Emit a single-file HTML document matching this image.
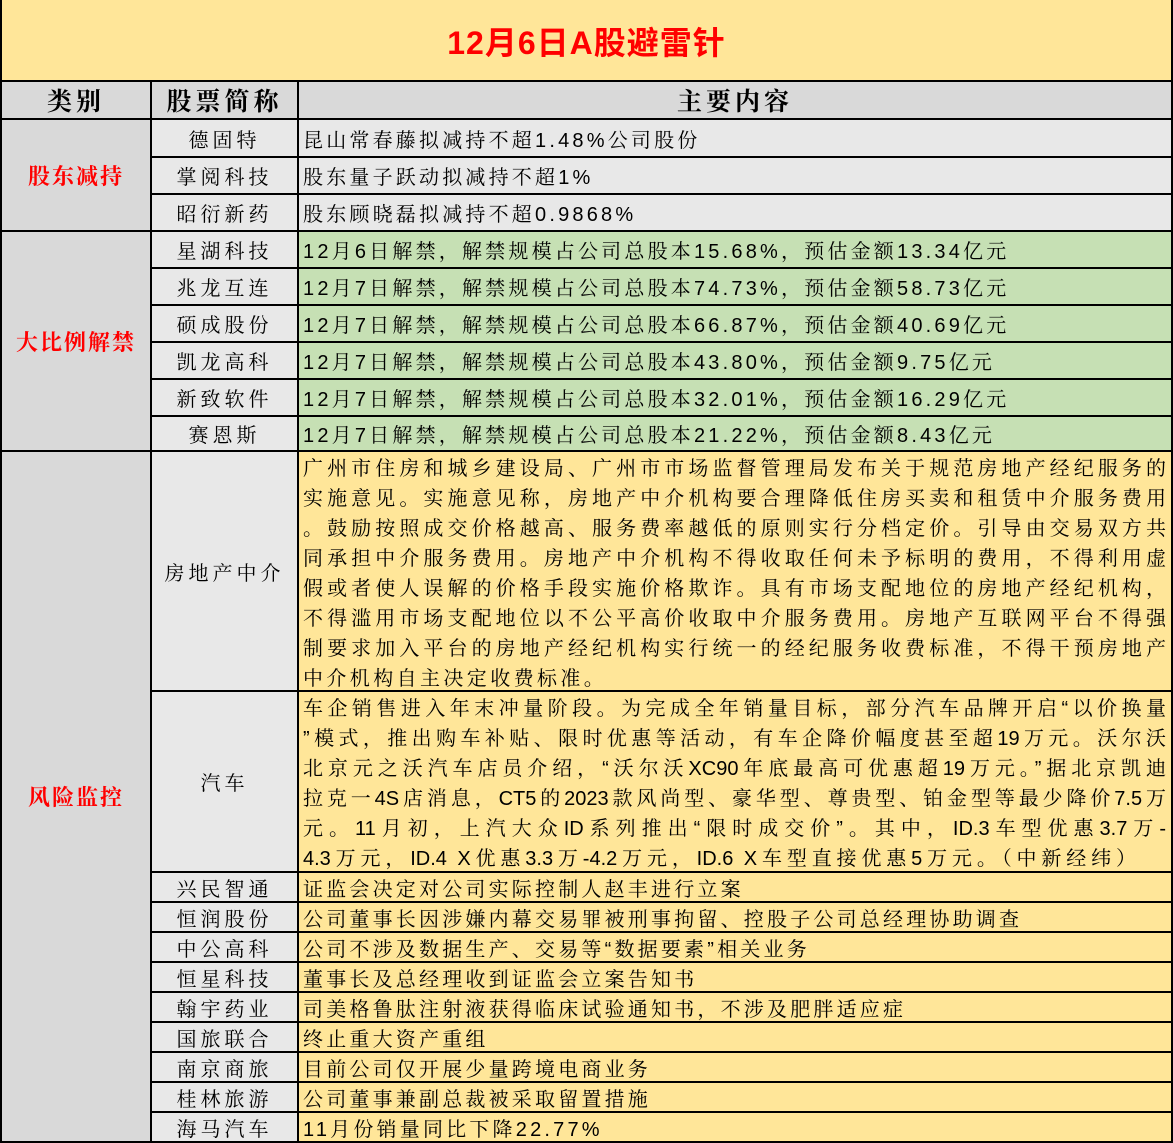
<!DOCTYPE html>
<html><head><meta charset="utf-8"><style>
body{margin:0;width:1173px;height:1143px;position:relative;overflow:hidden;background:#fff;font-family:"Liberation Sans","Noto Serif CJK SC",serif;}
.c{position:absolute;box-sizing:border-box;border-right:2px solid #000;border-bottom:2px solid #000;display:flex;align-items:center;}
.t{position:absolute;left:0;top:0;width:1173px;height:82px;background:#ffe699;border:2px solid #000;border-top:none;box-sizing:border-box;text-align:center;font:bold 32px "Liberation Sans","Noto Sans CJK SC",sans-serif;color:#f00;line-height:86px;letter-spacing:1px}
.h{background:#d9d9d9;justify-content:center;font-weight:bold;font-size:25px;letter-spacing:4px;font-family:"Liberation Serif","Noto Serif CJK SC",serif}
.cat{background:#d9d9d9;justify-content:center;color:#f00;font-weight:bold;font-size:22px;letter-spacing:2px;border-left:2px solid #000;font-family:"Liberation Serif","Noto Serif CJK SC",serif}
.n{background:#e8e8e8;justify-content:center;font-size:20px;letter-spacing:4px}
.g{background:#e8e8e8}.gr{background:#c6e0b4}.y{background:#ffe699}
.x{padding-left:4px;font-size:20px;letter-spacing:3.2px;white-space:nowrap}
.p{display:block;padding:2px 5px 0 4px;font-size:20px}
.p div{height:30px;line-height:30px;text-align:justify;text-align-last:justify;white-space:nowrap}
</style></head><body>
<div class="t">12月6日A股避雷针</div>
<div class="c h" style="left:0;top:82px;width:152px;height:38px;border-left:2px solid #000">类别</div>
<div class="c h" style="left:152px;top:82px;width:147px;height:38px">股票简称</div>
<div class="c h" style="left:299px;top:82px;width:874px;height:38px">主要内容</div>

<div class="c cat" style="left:0;top:120px;width:152px;height:112px">股东减持</div>
<div class="c cat" style="left:0;top:232px;width:152px;height:220px">大比例解禁</div>
<div class="c cat" style="left:0;top:452px;width:152px;height:691px">风险监控</div>

<div class="c n" style="left:152px;top:120px;width:147px;height:38px">德固特</div>
<div class="c x g" style="left:299px;top:120px;width:874px;height:38px">昆山常春藤拟减持不超1.48%公司股份</div>
<div class="c n" style="left:152px;top:158px;width:147px;height:37px">掌阅科技</div>
<div class="c x g" style="left:299px;top:158px;width:874px;height:37px">股东量子跃动拟减持不超1%</div>
<div class="c n" style="left:152px;top:195px;width:147px;height:37px">昭衍新药</div>
<div class="c x g" style="left:299px;top:195px;width:874px;height:37px">股东顾晓磊拟减持不超0.9868%</div>

<div class="c n" style="left:152px;top:232px;width:147px;height:37px">星湖科技</div>
<div class="c x gr" style="left:299px;top:232px;width:874px;height:37px">12月6日解禁，解禁规模占公司总股本15.68%，预估金额13.34亿元</div>
<div class="c n" style="left:152px;top:269px;width:147px;height:37px">兆龙互连</div>
<div class="c x gr" style="left:299px;top:269px;width:874px;height:37px">12月7日解禁，解禁规模占公司总股本74.73%，预估金额58.73亿元</div>
<div class="c n" style="left:152px;top:306px;width:147px;height:37px">硕成股份</div>
<div class="c x gr" style="left:299px;top:306px;width:874px;height:37px">12月7日解禁，解禁规模占公司总股本66.87%，预估金额40.69亿元</div>
<div class="c n" style="left:152px;top:343px;width:147px;height:37px">凯龙高科</div>
<div class="c x gr" style="left:299px;top:343px;width:874px;height:37px">12月7日解禁，解禁规模占公司总股本43.80%，预估金额9.75亿元</div>
<div class="c n" style="left:152px;top:380px;width:147px;height:37px">新致软件</div>
<div class="c x gr" style="left:299px;top:380px;width:874px;height:37px">12月7日解禁，解禁规模占公司总股本32.01%，预估金额16.29亿元</div>
<div class="c n" style="left:152px;top:417px;width:147px;height:35px">赛恩斯</div>
<div class="c x gr" style="left:299px;top:417px;width:874px;height:35px">12月7日解禁，解禁规模占公司总股本21.22%，预估金额8.43亿元</div>

<div class="c n" style="left:152px;top:452px;width:147px;height:240px">房地产中介</div>
<div class="c p y" style="left:299px;top:452px;width:874px;height:240px">
<div>广州市住房和城乡建设局、广州市市场监督管理局发布关于规范房地产经纪服务的</div>
<div>实施意见。实施意见称，房地产中介机构要合理降低住房买卖和租赁中介服务费用</div>
<div>。鼓励按照成交价格越高、服务费率越低的原则实行分档定价。引导由交易双方共</div>
<div>同承担中介服务费用。房地产中介机构不得收取任何未予标明的费用，不得利用虚</div>
<div>假或者使人误解的价格手段实施价格欺诈。具有市场支配地位的房地产经纪机构，</div>
<div>不得滥用市场支配地位以不公平高价收取中介服务费用。房地产互联网平台不得强</div>
<div>制要求加入平台的房地产经纪机构实行统一的经纪服务收费标准，不得干预房地产</div>
<div style="text-align-last:left;letter-spacing:3.4px">中介机构自主决定收费标准。</div>
</div>
<div class="c n" style="left:152px;top:692px;width:147px;height:181px">汽车</div>
<div class="c p y" style="left:299px;top:692px;width:874px;height:181px">
<div>车企销售进入年末冲量阶段。为完成全年销量目标，部分汽车品牌开启“以价换量</div>
<div>”模式，推出购车补贴、限时优惠等活动，有车企降价幅度甚至超19万元。沃尔沃</div>
<div>北京元之沃汽车店员介绍，“沃尔沃XC90年底最高可优惠超19万元。”据北京凯迪</div>
<div>拉克一4S店消息，CT5的2023款风尚型、豪华型、尊贵型、铂金型等最少降价7.5万</div>
<div>元。11月初，上汽大众ID系列推出“限时成交价”。其中，ID.3车型优惠3.7万-</div>
<div style="padding-right:30px">4.3万元，ID.4 X优惠3.3万-4.2万元，ID.6 X车型直接优惠5万元。（中新经纬）</div>
</div>

<div class="c n" style="left:152px;top:873px;width:147px;height:30px">兴民智通</div>
<div class="c x y" style="left:299px;top:873px;width:874px;height:30px">证监会决定对公司实际控制人赵丰进行立案</div>
<div class="c n" style="left:152px;top:903px;width:147px;height:30px">恒润股份</div>
<div class="c x y" style="left:299px;top:903px;width:874px;height:30px">公司董事长因涉嫌内幕交易罪被刑事拘留、控股子公司总经理协助调查</div>
<div class="c n" style="left:152px;top:933px;width:147px;height:30px">中公高科</div>
<div class="c x y" style="left:299px;top:933px;width:874px;height:30px">公司不涉及数据生产、交易等“数据要素”相关业务</div>
<div class="c n" style="left:152px;top:963px;width:147px;height:30px">恒星科技</div>
<div class="c x y" style="left:299px;top:963px;width:874px;height:30px">董事长及总经理收到证监会立案告知书</div>
<div class="c n" style="left:152px;top:993px;width:147px;height:30px">翰宇药业</div>
<div class="c x y" style="left:299px;top:993px;width:874px;height:30px">司美格鲁肽注射液获得临床试验通知书，不涉及肥胖适应症</div>
<div class="c n" style="left:152px;top:1023px;width:147px;height:30px">国旅联合</div>
<div class="c x y" style="left:299px;top:1023px;width:874px;height:30px">终止重大资产重组</div>
<div class="c n" style="left:152px;top:1053px;width:147px;height:30px">南京商旅</div>
<div class="c x y" style="left:299px;top:1053px;width:874px;height:30px">目前公司仅开展少量跨境电商业务</div>
<div class="c n" style="left:152px;top:1083px;width:147px;height:30px">桂林旅游</div>
<div class="c x y" style="left:299px;top:1083px;width:874px;height:30px">公司董事兼副总裁被采取留置措施</div>
<div class="c n" style="left:152px;top:1113px;width:147px;height:30px">海马汽车</div>
<div class="c x y" style="left:299px;top:1113px;width:874px;height:30px">11月份销量同比下降22.77%</div>
</body></html>
